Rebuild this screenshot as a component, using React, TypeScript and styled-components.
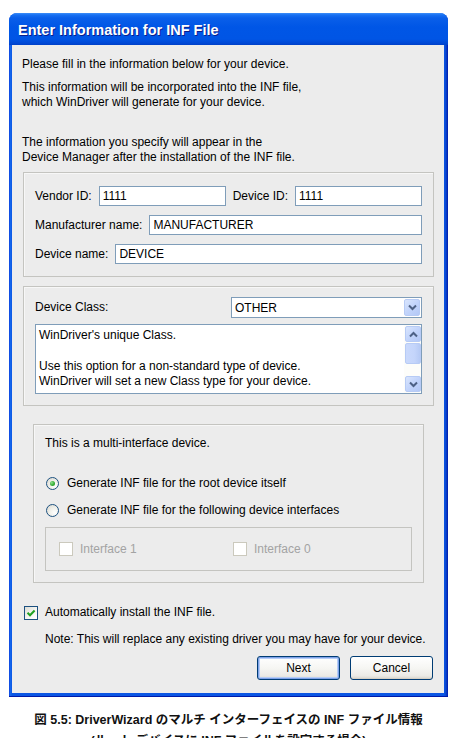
import React from "react";
import styled, { createGlobalStyle } from "styled-components";

const GlobalStyle = createGlobalStyle`
  html, body { margin: 0; padding: 0; background: #ffffff; }
  body { font-family: "Liberation Sans", Arial, sans-serif; font-size: 12px; color: #000; }
  * { box-sizing: border-box; }
`;

const Page = styled.div`
  width: 457px;
  height: 738px;
  overflow: hidden;
  padding-top: 13px;
  display: flex;
  flex-direction: column;
  & > * { flex-shrink: 0; }
`;

const Window = styled.div`
  margin-left: 9px;
  width: 439px;
  border-radius: 8px 8px 0 0;
  background: linear-gradient(to right, #0831d9 0, #166aee 1px, #0b56e4 3px, #0b56e4 435px, #0846d0 437px, #0019a8 439px);
  display: flex;
  flex-direction: column;
  overflow: hidden;
  box-shadow: inset 0 -1px #0019a8;
`;

const TitleBar = styled.div`
  flex-shrink: 0;
  height: 32px;
  padding: 2px 0 0 9px;
  display: flex;
  align-items: center;
  color: #ffffff;
  font-weight: bold;
  font-size: 14.5px;
  text-shadow: 1px 1px 0 #0a1f8c;
  background: linear-gradient(
    to bottom,
    #3d8ef7 0px,
    #1770f2 2px,
    #0a5fe9 5px,
    #0056e6 14px,
    #0055e5 26px,
    #0049d6 30px,
    #0040c8 32px
  );
`;

const Body = styled.div`
  margin: 0 4px 4px 3px;
  background: #ececec;
  padding: 12px 10px 13px 10px;
  display: flex;
  flex-direction: column;
  & > * { flex-shrink: 0; }
`;

const Para = styled.p<{ $mt?: number }>`
  margin: ${(p) => p.$mt ?? 0}px 0 0 0;
  line-height: 15px;
`;

const GroupBox = styled.div<{ $mt: number; $mx?: number }>`
  margin: ${(p) => p.$mt}px ${(p) => p.$mx ?? 0}px 0 ${(p) => (p.$mx ?? 0) + 1}px;
  border: 1px solid #c4c4c0;
  box-shadow: inset 1px 1px 0 #f7f7f7;
  display: flex;
  flex-direction: column;
  & > * { flex-shrink: 0; }
`;

const FieldsBox = styled(GroupBox)`
  padding: 13px 11px 12px 11px;
  gap: 9px;
`;

const ClassBox = styled(GroupBox)`
  padding: 10px 11px 11px 11px;
`;

const MultiBox = styled(GroupBox)`
  padding: 11px 11px 11px 11px;
`;

const FieldRow = styled.div`
  display: flex;
  align-items: center;
  gap: 7px;
`;

const Label = styled.span`
  white-space: nowrap;
  line-height: 15px;
`;

const TextBox = styled.div`
  flex: 1;
  height: 20px;
  border: 1px solid #7f9db9;
  background: #ffffff;
  padding: 0 3px;
  display: flex;
  align-items: center;
  white-space: nowrap;
`;

const SelectRow = styled.div`
  display: flex;
  align-items: center;
  justify-content: space-between;
`;

const Select = styled.div`
  width: 191px;
  height: 21px;
  border: 1px solid #7f9db9;
  background: #ffffff;
  display: flex;
  align-items: center;
  padding: 1px;
`;

const SelectValue = styled.span`
  flex: 1;
  padding-left: 2px;
`;

const ArrowButton = styled.div<{ $h?: number }>`
  flex-shrink: 0;
  width: 16px;
  height: ${(p) => p.$h ?? 17}px;
  border: 1px solid #b7cbf5;
  border-radius: 2px;
  background: linear-gradient(135deg, #d9e5fd 0%, #c2d4fb 50%, #b3c8f6 100%);
  display: flex;
  align-items: center;
  justify-content: center;
`;

const TextArea = styled.div`
  margin-top: 6px;
  height: 70px;
  border: 1px solid #7f9db9;
  background: #ffffff;
  display: flex;
`;

const TextAreaContent = styled.div`
  flex: 1;
  padding: 3px 3px;
  line-height: 15.3px;
  white-space: nowrap;
  overflow: hidden;
`;

const ScrollBar = styled.div`
  width: 17px;
  background: #fdfdfa;
  display: flex;
  flex-direction: column;
  padding: 1px 0 1px 1px;
`;

const Thumb = styled.div`
  flex-shrink: 0;
  margin-top: 1px;
  width: 16px;
  height: 21px;
  border: 1px solid #b7cbf5;
  border-radius: 2px;
  background: linear-gradient(to right, #cad9fc 0%, #c4d5fb 60%, #b6caf5 100%);
`;

const Spacer = styled.div`
  flex: 1;
`;

const OptionRow = styled.div<{ $mt: number }>`
  margin-top: ${(p) => p.$mt}px;
  display: flex;
  align-items: center;
  gap: 8px;
  line-height: 15px;
`;

const Radio = styled.span<{ $checked?: boolean }>`
  position: relative;
  margin-left: 1px;
  width: 13px;
  height: 13px;
  border-radius: 50%;
  border: 1px solid #1c5180;
  background: radial-gradient(circle at 70% 70%, #ffffff 0%, #f0f0ea 45%, #d6d4cc 100%);
  flex-shrink: 0;
  &::after {
    content: "";
    display: ${(p) => (p.$checked ? "block" : "none")};
    position: absolute;
    left: 3px;
    top: 3px;
    width: 5px;
    height: 5px;
    border-radius: 50%;
    background: radial-gradient(circle at 35% 35%, #8fe08f 0%, #3bb13b 50%, #1a8f1a 100%);
  }
`;

const InterfaceBox = styled.div`
  margin-top: 9px;
  height: 44px;
  border: 1px solid #c4c4c0;
  display: grid;
  grid-template-columns: 174px 1fr;
  align-items: center;
  padding-left: 13px;
`;

const CheckItem = styled.div<{ $disabled?: boolean }>`
  display: flex;
  align-items: center;
  gap: 7px;
  color: ${(p) => (p.$disabled ? "#a3a3a3" : "#000")};
  line-height: 15px;
`;

const CheckBox = styled.span<{ $disabled?: boolean }>`
  width: 14px;
  height: 14px;
  flex-shrink: 0;
  border: 1px solid ${(p) => (p.$disabled ? "#cbc9bd" : "#1c5180")};
  background: ${(p) =>
    p.$disabled ? "#ffffff" : "linear-gradient(135deg, #dcdcd5 0%, #f4f4f0 50%, #ffffff 100%)"};
  display: flex;
  align-items: center;
  justify-content: center;
`;

const AutoRow = styled.div`
  margin: 22px 0 0 2px;
  display: flex;
  align-items: center;
  gap: 7px;
  line-height: 15px;
`;

const Note = styled.p`
  margin: 12px 0 0 23px;
  line-height: 15px;
  white-space: nowrap;
`;

const ButtonRow = styled.div`
  margin-top: 9px;
  padding-right: 1px;
  display: flex;
  justify-content: flex-end;
  gap: 10px;
`;

const Button = styled.button<{ $default?: boolean }>`
  width: 83px;
  height: 24px;
  border: 1px solid #003c74;
  border-radius: 3px;
  background: linear-gradient(to bottom, #ffffff 0%, #f6f6f3 50%, #ecebe6 85%, #d8d5cc 100%);
  font-family: "Liberation Sans", Arial, sans-serif;
  font-size: 12px;
  color: #000;
  padding: 0;
  box-shadow: ${(p) =>
    p.$default
      ? "inset 0 0 0 1px #7ea2e8, inset 0 0 0 2px #b6cdf6"
      : "inset 0 -1px 0 #d6d0c5"};
`;

const Caption = styled.div`
  margin-top: 13px;
  width: 100%;
  text-align: center;
  font-family: "Liberation Sans", "Noto Sans CJK JP", sans-serif;
  font-weight: bold;
  font-size: 12.5px;
  line-height: 21px;
  color: #111;
`;

const ChevronDown = () => (
  <svg width="9" height="7" viewBox="0 0 9 7">
    <path d="M1 1.5 L4.5 5 L8 1.5" fill="none" stroke="#4d6185" strokeWidth="2" />
  </svg>
);

const ChevronUp = () => (
  <svg width="9" height="7" viewBox="0 0 9 7">
    <path d="M1 5.5 L4.5 2 L8 5.5" fill="none" stroke="#4d6185" strokeWidth="2" />
  </svg>
);

const CheckMark = () => (
  <svg width="10" height="10" viewBox="0 0 10 10">
    <path d="M1.5 4.8 L4 7.3 L8.6 2.5" fill="none" stroke="#21a121" strokeWidth="2" />
  </svg>
);

export default function App() {
  return (
    <>
      <GlobalStyle />
      <Page>
        <Window>
          <TitleBar>Enter Information for INF File</TitleBar>
          <Body>
            <Para>Please fill in the information below for your device.</Para>
            <Para $mt={8}>
              This information will be incorporated into the INF file,
              <br />
              which WinDriver will generate for your device.
            </Para>
            <Para $mt={25}>
              The information you specify will appear in the
              <br />
              Device Manager after the installation of the INF file.
            </Para>

            <FieldsBox $mt={7}>
              <FieldRow>
                <Label>Vendor ID:</Label>
                <TextBox>1111</TextBox>
                <Label>Device ID:</Label>
                <TextBox>1111</TextBox>
              </FieldRow>
              <FieldRow>
                <Label>Manufacturer name:</Label>
                <TextBox>MANUFACTURER</TextBox>
              </FieldRow>
              <FieldRow>
                <Label>Device name:</Label>
                <TextBox>DEVICE</TextBox>
              </FieldRow>
            </FieldsBox>

            <ClassBox $mt={9}>
              <SelectRow>
                <Label>Device Class:</Label>
                <Select>
                  <SelectValue>OTHER</SelectValue>
                  <ArrowButton>
                    <ChevronDown />
                  </ArrowButton>
                </Select>
              </SelectRow>
              <TextArea>
                <TextAreaContent>
                  WinDriver's unique Class.
                  <br />
                  <br />
                  Use this option for a non-standard type of device.
                  <br />
                  WinDriver will set a new Class type for your device.
                </TextAreaContent>
                <ScrollBar>
                  <ArrowButton $h={16}>
                    <ChevronUp />
                  </ArrowButton>
                  <Thumb />
                  <Spacer />
                  <ArrowButton $h={16}>
                    <ChevronDown />
                  </ArrowButton>
                </ScrollBar>
              </TextArea>
            </ClassBox>

            <MultiBox $mt={18} $mx={10}>
              <Para>This is a multi-interface device.</Para>
              <OptionRow $mt={25}>
                <Radio $checked />
                <span>Generate INF file for the root device itself</span>
              </OptionRow>
              <OptionRow $mt={12}>
                <Radio />
                <span>Generate INF file for the following device interfaces</span>
              </OptionRow>
              <InterfaceBox>
                <CheckItem $disabled>
                  <CheckBox $disabled />
                  <span>Interface 1</span>
                </CheckItem>
                <CheckItem $disabled>
                  <CheckBox $disabled />
                  <span>Interface 0</span>
                </CheckItem>
              </InterfaceBox>
            </MultiBox>

            <AutoRow>
              <CheckBox>
                <CheckMark />
              </CheckBox>
              <span>Automatically install the INF file.</span>
            </AutoRow>
            <Note>Note: This will replace any existing driver you may have for your device.</Note>
            <ButtonRow>
              <Button $default>Next</Button>
              <Button>Cancel</Button>
            </ButtonRow>
          </Body>
        </Window>
        <Caption>
          図 5.5: DriverWizard のマルチ インターフェイスの INF ファイル情報
          <br />
          (ルート デバイスに INF ファイルを設定する場合)
        </Caption>
      </Page>
    </>
  );
}
